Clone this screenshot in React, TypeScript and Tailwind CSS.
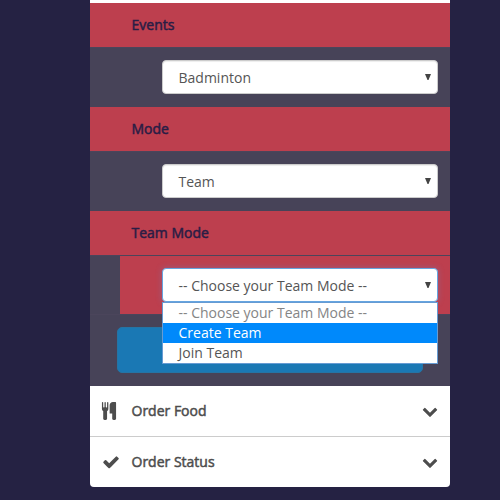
import React from "react";

const CUTLERY =
  "M832 64v640q0 61-35.5 111t-92.5 70v779q0 52-38 90t-90 38h-128q-52 0-90-38t-38-90v-779q-57-20-92.5-70t-35.5-111v-640q0-26 19-45t45-19 45 19 19 45v416q0 26 19 45t45 19 45-19 19-45v-416q0-26 19-45t45-19 45 19 19 45v416q0 26 19 45t45 19 45-19 19-45v-416q0-26 19-45t45-19 45 19 19 45zm768 0v1600q0 52-38 90t-90 38h-128q-52 0-90-38t-38-90v-512h-224q-13 0-22.5-9.5t-9.5-22.5v-800q0-132 94-226t226-94h256q26 0 45 19t19 45z";
const CHECK =
  "M1671 566q0 40-28 68l-724 724-136 136q-28 28-68 28t-68-28l-136-136-362-362q-28-28-28-68t28-68l136-136q28-28 68-28t68 28l294 295 656-657q28-28 68-28t68 28l136 136q28 28 28 68z";
const CHEVRON =
  "M1683 808l-742 741q-19 19-45 19t-45-19l-742-741q-19-19-19-45.5t19-45.5l166-165q19-19 45-19t45 19l531 531 531-531q19-19 45-19t45 19l166 165q19 19 19 45.5t-19 45.5z";

function Icon({ d, className }: { d: string; className: string }) {
  return (
    <svg viewBox="0 0 1792 1792" fill="currentColor" className={className}>
      <path d={d} />
    </svg>
  );
}

function Heading({ children }: { children: React.ReactNode }) {
  return (
    <div className="flex h-11 shrink-0 items-center bg-[#bd3f4e] pl-[41.5px] text-[#2a1d45] [-webkit-text-stroke:0.5px_currentColor]">
      {children}
    </div>
  );
}

function SelectBox({ value, focused = false }: { value: string; focused?: boolean }) {
  return (
    <div
      className={`flex h-[34px] w-[276px] items-center justify-between rounded border bg-white pl-[15.5px] pr-[6px] text-[#555] ${
        focused
          ? "border-[#66a5e0] shadow-[0_0_6px_rgba(102,140,200,0.4)]"
          : "border-[#ccc] shadow-[inset_0_1px_1px_rgba(0,0,0,0.075)]"
      }`}
    >
      <span className="whitespace-nowrap pt-[2px]">{value}</span>
      <svg viewBox="0 0 6 6" className="-mt-px h-[6px] w-[6px]" fill="#444">
        <path d="M0 0h6L3.5 6h-1z" />
      </svg>
    </div>
  );
}

function MenuRow({ icon, iconClass, label }: { icon: string; iconClass: string; label: string }) {
  return (
    <div className="flex h-[50px] items-center text-[#4d4d4d]">
      <div className="flex w-[41.5px] shrink-0">
        <Icon d={icon} className={`h-[18px] w-[18px] ${iconClass}`} />
      </div>
      <span className="flex-1 [-webkit-text-stroke:0.5px_currentColor]">{label}</span>
      <Icon d={CHEVRON} className="mr-[12.5px] h-4 w-4" />
    </div>
  );
}

export default function App() {
  return (
    <div className="h-[500px] w-[500px] overflow-hidden bg-[#252243] font-['Open_Sans',sans-serif] text-[14px] leading-5">
      <div className="ml-[90px] flex h-[487px] w-[360px] flex-col overflow-hidden rounded-b bg-[#474358]">
        <div className="h-[3px] shrink-0 bg-white" />
        <Heading>Events</Heading>
        <div className="flex h-[60px] shrink-0 border-t border-[#4b455b] pl-[72px] pt-3">
          <SelectBox value="Badminton" />
        </div>
        <Heading>Mode</Heading>
        <div className="flex h-[60px] shrink-0 border-t border-[#4b455b] pl-[72px] pt-3">
          <SelectBox value="Team" />
        </div>
        <Heading>Team Mode</Heading>
        <div className="h-[60px] shrink-0 border-y border-[#4b455b] pl-[30px]">
          <div className="relative h-[58px] bg-[#bd3f4e] pl-[42px] pt-3">
            <SelectBox value="-- Choose your Team Mode --" focused />
            <div className="absolute left-[42px] top-[46px] z-10 w-[276px] border border-[#669bd3] bg-white text-[#555]">
              <div className="h-5 pl-[15.5px] text-[#858585]">-- Choose your Team Mode --</div>
              <div className="h-5 bg-[#0089fb] pl-[15.5px] text-white">Create Team</div>
              <div className="h-5 pl-[15.5px]">Join Team</div>
            </div>
          </div>
        </div>
        <div className="h-[71px] shrink-0 pl-[27px] pt-[12px]">
          <button className="block h-[46px] w-[306px] rounded-[5px] border border-[#2574a4] bg-[#1a78b4]" aria-label="Submit" />
        </div>
        <div className="flex flex-1 flex-col bg-white">
          <MenuRow icon={CUTLERY} iconClass="ml-[10px]" label="Order Food" />
          <div className="h-px shrink-0 bg-[#ccc]" />
          <MenuRow icon={CHECK} iconClass="ml-[11.5px]" label="Order Status" />
        </div>
      </div>
    </div>
  );
}
